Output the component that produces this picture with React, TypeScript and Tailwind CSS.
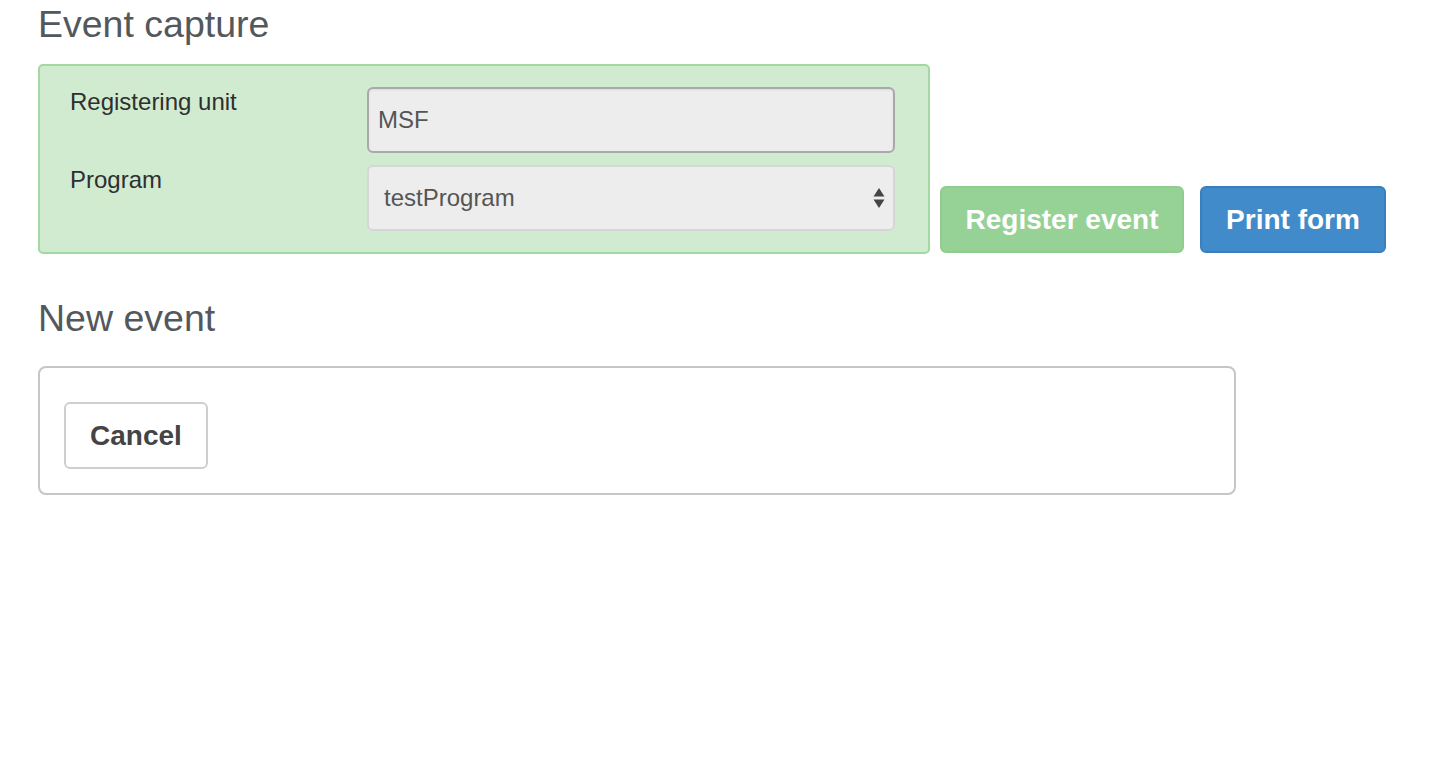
import React from "react";

export default function App() {
  return (
    <div className="min-h-[770px] w-[1448px] bg-white pl-[38px] pt-[4px] font-['Liberation_Sans',Arial,sans-serif]">
      <h2 className="text-[37.5px] leading-[41px] text-[#53585c]">Event capture</h2>

      <div className="mt-[19px] flex items-end">
        <div className="w-[892px] rounded-[5px] border-2 border-[#a3d8a3] bg-[#d1ebd1] pb-[21px] pl-[30px] pr-[33px] pt-[21px]">
          <div className="grid grid-cols-[297px_528px] gap-y-[12px]">
            <div className="text-[24px] leading-[29px] text-[#2f2f2f]">Registering unit</div>
            <div className="flex h-[66px] items-center rounded-[6px] border-2 border-[#a9a9a9] bg-[#ededed] pl-[9px] text-[24px] text-[#555] shadow-[inset_0_1px_2px_rgba(0,0,0,0.08)]">
              MSF
            </div>
            <div className="text-[24px] leading-[29px] text-[#2f2f2f]">Program</div>
            <div className="flex h-[66px] items-center justify-between rounded-[6px] border-2 border-[#d6d6d6] bg-[#ededed] pl-[15px] pr-[8px] text-[24px] text-[#555]">
              <span>testProgram</span>
              <svg width="12" height="22" viewBox="0 0 12 22">
                <polygon points="6,1 11.5,9.5 0.5,9.5" fill="#454545" />
                <polygon points="0.5,12.5 11.5,12.5 6,21" fill="#454545" />
              </svg>
            </div>
          </div>
        </div>

        <div className="mb-[1px] ml-[10px] flex h-[67px] w-[244px] items-center justify-center rounded-[6px] border-2 border-[#8fcd8f] bg-[#96d196] text-[28px] font-bold text-white">
          Register event
        </div>
        <div className="mb-[1px] ml-[16px] flex h-[67px] w-[186px] items-center justify-center rounded-[6px] border-2 border-[#3a7fbd] bg-[#428bca] text-[28px] font-bold text-white">
          Print form
        </div>
      </div>

      <h2 className="mt-[44px] text-[37.5px] leading-[41px] text-[#53585c]">New event</h2>

      <div className="mt-[27px] w-[1198px] rounded-[8px] border-2 border-[#c6c6c6] pb-[24px] pl-[24px] pt-[34px]">
        <div className="flex h-[67px] w-[144px] items-center justify-center rounded-[6px] border-2 border-[#cfcfcf] bg-white text-[28px] font-bold text-[#444]">
          Cancel
        </div>
      </div>
    </div>
  );
}
